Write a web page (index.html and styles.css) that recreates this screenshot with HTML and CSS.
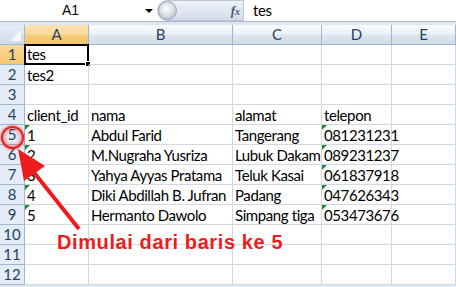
FILE: index.html
```html
<!DOCTYPE html>
<html lang="en">
<head>
    <meta charset="UTF-8">
    <title>Sheet1</title>
    <link rel="stylesheet" href="styles.css">
</head>
<body>
    <div class="formula-bar">
        <div class="name-box">A1</div>
        <div class="name-drop"></div>
        <div class="fx-pill">
            <span class="fx-knob"></span>
            <span class="fx">f<small>x</small></span>
        </div>
        <div class="formula-input">tes</div>
    </div>

    <div class="sheet">
        <div class="corner"><span class="corner-tri"></span></div>
        <div class="col-head selected">A</div>
        <div class="col-head">B</div>
        <div class="col-head">C</div>
        <div class="col-head">D</div>
        <div class="col-head">E</div>

        <div class="row-head selected">1</div>
        <div class="cell active">tes<span class="handle"></span></div>
        <div class="cell"></div><div class="cell"></div><div class="cell"></div><div class="cell"></div>

        <div class="row-head">2</div>
        <div class="cell">tes2</div>
        <div class="cell"></div><div class="cell"></div><div class="cell"></div><div class="cell"></div>

        <div class="row-head">3</div>
        <div class="cell"></div><div class="cell"></div><div class="cell"></div><div class="cell"></div><div class="cell"></div>

        <div class="row-head">4</div>
        <div class="cell">client_id</div>
        <div class="cell">nama</div>
        <div class="cell">alamat</div>
        <div class="cell">telepon</div>
        <div class="cell"></div>

        <div class="row-head">5</div>
        <div class="cell flag">1</div>
        <div class="cell">Abdul Farid</div>
        <div class="cell">Tangerang</div>
        <div class="cell flag">081231231</div>
        <div class="cell"></div>

        <div class="row-head">6</div>
        <div class="cell flag">2</div>
        <div class="cell">M.Nugraha Yusriza</div>
        <div class="cell">Lubuk Dakam</div>
        <div class="cell flag">089231237</div>
        <div class="cell"></div>

        <div class="row-head">7</div>
        <div class="cell flag">3</div>
        <div class="cell">Yahya Ayyas Pratama</div>
        <div class="cell">Teluk Kasai</div>
        <div class="cell flag">061837918</div>
        <div class="cell"></div>

        <div class="row-head">8</div>
        <div class="cell flag">4</div>
        <div class="cell">Diki Abdillah B. Jufran</div>
        <div class="cell">Padang</div>
        <div class="cell flag">047626343</div>
        <div class="cell"></div>

        <div class="row-head">9</div>
        <div class="cell flag">5</div>
        <div class="cell">Hermanto Dawolo</div>
        <div class="cell">Simpang tiga</div>
        <div class="cell flag">053473676</div>
        <div class="cell"></div>

        <div class="row-head">10</div>
        <div class="cell"></div><div class="cell"></div><div class="cell"></div><div class="cell"></div><div class="cell"></div>

        <div class="row-head">11</div>
        <div class="cell"></div><div class="cell"></div><div class="cell"></div><div class="cell"></div><div class="cell"></div>

        <div class="row-head">12</div>
        <div class="cell"></div><div class="cell"></div><div class="cell"></div><div class="cell"></div><div class="cell"></div>
    </div>

    <!-- annotation on top of the sheet -->
    <div class="ring"></div>
    <svg class="arrow" width="456" height="287" viewBox="0 0 456 287">
        <line x1="79" y1="229" x2="32" y2="170" stroke="#ee1c1c" stroke-width="4"/>
        <polygon points="18,149 45,166 24,181" fill="#ee1c1c"/>
    </svg>
    <div class="note">Dimulai dari baris ke 5</div>
</body>
</html>
```

FILE: styles.css
```css
:root {
    --grid-line: #d0d7e5;
    --head-line: #9eb6ce;
    --head-text: #27415f;
    --note-red: #ee1c1c;
}

* {
    box-sizing: border-box;
    margin: 0;
    padding: 0;
}

body {
    width: 456px;
    height: 287px;
    overflow: hidden;
    position: relative;
    background-color: #dde6f1;
    font-family: Lato, 'Liberation Sans', sans-serif;
    font-size: 15px;
    letter-spacing: -0.4px;
    color: #000;
}

/* formula bar */
.formula-bar {
    display: flex;
    height: 22px;
    background-color: #fff;
    border-bottom: 1px solid #a7b9d0;
    margin-bottom: 3px;
}

.name-box {
    width: 141px;
    line-height: 21px;
    text-align: center;
    font-family: 'Liberation Sans', sans-serif;
    font-size: 14px;
    letter-spacing: 0;
}

.name-drop {
    width: 16px;
    position: relative;
}

.name-drop::after {
    content: '';
    position: absolute;
    left: 4px;
    top: 9px;
    border-left: 4px solid transparent;
    border-right: 4px solid transparent;
    border-top: 4px solid #000;
}

.fx-pill {
    width: 86px;
    display: flex;
    align-items: center;
    justify-content: space-between;
    background: linear-gradient(#eef2f8, #d3dcea);
    border-radius: 11px 0 0 11px;
    border: 1px solid #b9c6d8;
    border-right: none;
}

.fx-knob {
    width: 19px;
    height: 19px;
    border-radius: 50%;
    background: radial-gradient(circle at 45% 40%, #ffffff, #d5d9df 55%, #a9b0ba);
    border: 1px solid #9aa5b4;
}

.fx {
    font-family: 'Liberation Serif', serif;
    font-style: italic;
    font-weight: bold;
    font-size: 13px;
    letter-spacing: 0;
    color: #4d5a6b;
    padding-right: 3px;
}

.fx small {
    font-size: 10px;
}

.formula-input {
    flex: 1;
    line-height: 21px;
    padding-left: 9px;
    border-left: 1px solid #b9c6d8;
}

/* sheet grid */
.sheet {
    display: grid;
    grid-template-columns: 25px 64px 144px 89px 70px 1fr;
    grid-auto-rows: 20px;
    background-color: #fff;
}

.corner {
    position: relative;
    background: linear-gradient(#e7eef7, #cfdbea);
    border-right: 1px solid var(--head-line);
    border-bottom: 1px solid var(--head-line);
}

.corner-tri {
    position: absolute;
    right: 3px;
    bottom: 3px;
    border-left: 11px solid transparent;
    border-bottom: 11px solid #f4f7fb;
}

.col-head {
    background: linear-gradient(#f9fbfd 0%, #eaf0f7 50%, #dde6f1 51%, #d3dce9 100%);
    border-right: 1px solid var(--head-line);
    border-bottom: 1px solid var(--head-line);
    text-align: center;
    line-height: 19px;
    font-size: 15px;
    letter-spacing: 0;
    color: var(--head-text);
}

.col-head.selected {
    background: linear-gradient(#fbe3b4 0%, #f9d99a 50%, #f7ca74 51%, #f5c56b 100%);
    border-bottom-color: #f2a03b;
}

.row-head {
    background-color: #e4ecf7;
    border-right: 1px solid var(--head-line);
    border-bottom: 1px solid var(--head-line);
    text-align: center;
    line-height: 19px;
    font-size: 15px;
    letter-spacing: 0;
    color: var(--head-text);
}

.row-head.selected {
    background: linear-gradient(#f9d99a, #f6c86f);
    border-right-color: #f2a03b;
}

.cell {
    position: relative;
    border-right: 1px solid var(--grid-line);
    border-bottom: 1px solid var(--grid-line);
    padding-left: 2px;
    line-height: 20px;
    white-space: nowrap;
}

.cell.active {
    border: 2px solid #000;
    line-height: 17px;
    padding-left: 1px;
    margin: -1px 0 0 -1px;
}

.handle {
    position: absolute;
    right: -4px;
    bottom: -4px;
    width: 6px;
    height: 6px;
    background-color: #000;
    border: 1px solid #fff;
}

.cell.flag::before {
    content: '';
    position: absolute;
    left: 0;
    top: 0;
    border-top: 5px solid #1e8c2e;
    border-right: 5px solid transparent;
}

/* annotation overlay */
.ring {
    position: absolute;
    left: 1px;
    top: 126px;
    width: 23px;
    height: 23px;
    border-radius: 50%;
    border: 2px solid var(--note-red);
    box-shadow: 0 0 3px rgba(238, 28, 28, 0.8), inset 0 0 5px rgba(238, 28, 28, 0.7);
}

.arrow {
    position: absolute;
    left: 0;
    top: 0;
}

.note {
    position: absolute;
    left: 57px;
    top: 231px;
    font-family: 'Liberation Sans', sans-serif;
    font-weight: bold;
    font-size: 20px;
    letter-spacing: 0.6px;
    color: var(--note-red);
    white-space: nowrap;
}
```
